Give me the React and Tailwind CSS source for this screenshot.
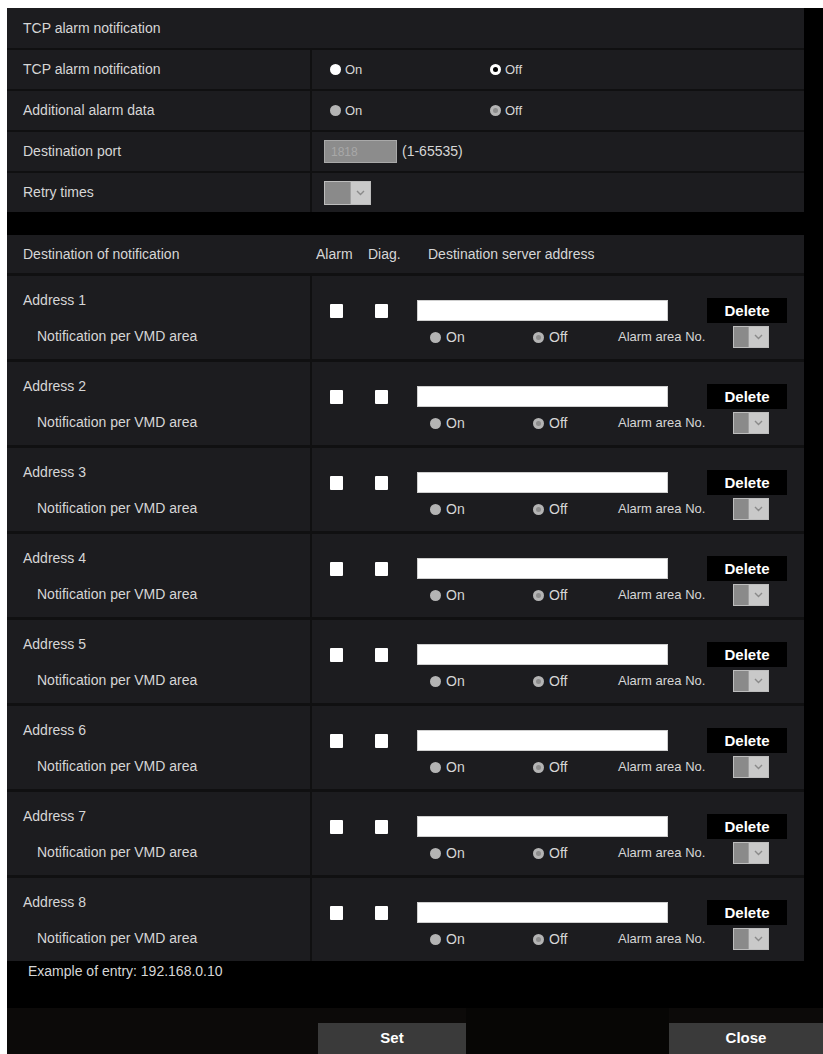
import React from 'react';

const rowBg = 'bg-[#1c1c1f]';

const Radio = ({ kind }) => {
  if (kind === 'on') return <span className="inline-block w-[11px] h-[11px] rounded-full bg-white" />;
  if (kind === 'off')
    return (
      <span className="inline-flex w-[11px] h-[11px] rounded-full bg-white items-center justify-center">
        <span className="w-[5px] h-[5px] rounded-full bg-black" />
      </span>
    );
  if (kind === 'dimOff')
    return (
      <span className="inline-flex w-[11px] h-[11px] rounded-full bg-[#b4b4b4] items-center justify-center">
        <span className="w-[5px] h-[5px] rounded-full bg-[#8c8c8c]" />
      </span>
    );
  return <span className="inline-block w-[11px] h-[11px] rounded-full bg-[#b4b4b4]" />;
};

const Select = ({ w }) => (
  <div className={`flex ${w} h-full border border-[#bdbdbd] bg-[#8a8a8a]`}>
    <div className="flex-1" />
    <div className="w-[20px] h-full bg-[#c9c9c9] border-l border-[#a0a0a0] flex items-center justify-center">
      <svg width="9" height="6" viewBox="0 0 9 6">
        <path d="M1 1 L4.5 4.5 L8 1" fill="none" stroke="#8a8a8a" strokeWidth="1.4" />
      </svg>
    </div>
  </div>
);

const TopRow = ({ label, children }) => (
  <div className="flex h-[39px] gap-[2px]">
    <div className={`w-[303px] ${rowBg} pl-[16px] flex items-center`}>{label}</div>
    <div className={`flex-1 ${rowBg} flex items-center`}>{children}</div>
  </div>
);

const AddressRow = ({ n }) => (
  <div className="flex h-[83px] gap-[2px]">
    <div className={`w-[303px] ${rowBg} pl-[16px] pt-[16px] leading-[16px]`}>
      <div>Address {n}</div>
      <div className="pl-[14px] mt-[20px]">Notification per VMD area</div>
    </div>
    <div className={`flex-1 ${rowBg} pl-[18px] pt-[22px]`}>
      <div className="flex items-center h-[25px]">
        <span className="w-[13px] h-[14px] bg-white rounded-[1px]" />
        <span className="w-[13px] h-[14px] bg-white rounded-[1px] ml-[32px]" />
        <div className="ml-[29px] w-[251px] h-[21px] bg-white border border-[#cfcfcf]" />
        <button className="ml-[39px] w-[80px] h-[25px] bg-black text-white font-bold text-[15px] leading-none">
          Delete
        </button>
      </div>
      <div className="flex items-center h-[22px] mt-[3px] text-[14px]">
        <div className="ml-[100px] w-[103px] flex items-center gap-[5px]">
          <Radio kind="dim" />
          <span>On</span>
        </div>
        <div className="w-[85px] flex items-center gap-[5px]">
          <Radio kind="dimOff" />
          <span>Off</span>
        </div>
        <div className="w-[115px] text-[13px]">Alarm area No.</div>
        <div className="h-[22px]">
          <Select w="w-[36px]" />
        </div>
      </div>
    </div>
  </div>
);

export default function App() {
  return (
    <div className="w-[823px] h-[1054px] bg-white pt-[8px] pl-[7px] overflow-hidden font-['Liberation_Sans',Arial,sans-serif] text-[14px] text-[#d6d6d6]">
      <div className="bg-black h-full flex flex-col">
        <div className="w-[797px] flex flex-col gap-[2px] bg-[#101011]">
          <div className={`h-[40px] ${rowBg} pl-[16px] flex items-center`}>TCP alarm notification</div>
          <TopRow label="TCP alarm notification">
            <div className="pl-[18px] w-[178px] flex items-center gap-[4px]">
              <Radio kind="on" />
              <span className="text-[13px]">On</span>
            </div>
            <div className="flex items-center gap-[4px]">
              <Radio kind="off" />
              <span className="text-[13px]">Off</span>
            </div>
          </TopRow>
          <TopRow label="Additional alarm data">
            <div className="pl-[18px] w-[178px] flex items-center gap-[4px]">
              <Radio kind="dim" />
              <span className="text-[13px]">On</span>
            </div>
            <div className="flex items-center gap-[4px]">
              <Radio kind="dimOff" />
              <span className="text-[13px]">Off</span>
            </div>
          </TopRow>
          <TopRow label="Destination port">
            <div className="ml-[12px] w-[73px] h-[23px] bg-[#8c8c8c] border border-[#a9a9a9] pl-[6px] flex items-center text-[12px] text-[#a8a8a8]">
              1818
            </div>
            <span className="ml-[5px]">(1-65535)</span>
          </TopRow>
          <TopRow label="Retry times">
            <div className="ml-[12px] h-[24px]">
              <Select w="w-[47px]" />
            </div>
          </TopRow>
        </div>

        <div className="w-[797px] mt-[23px] flex flex-col gap-[3px] bg-[#101011]">
          <div className={`h-[38px] ${rowBg} pl-[16px] flex items-center`}>
            <span className="w-[293px]">Destination of notification</span>
            <span className="w-[52px]">Alarm</span>
            <span className="w-[60px]">Diag.</span>
            <span>Destination server address</span>
          </div>
          {[1, 2, 3, 4, 5, 6, 7, 8].map((n) => (
            <AddressRow key={n} n={n} />
          ))}
        </div>

        <div className="pl-[21px] pt-[2px] leading-[16px]">Example of entry: 192.168.0.10</div>

        <div className="mt-auto h-[46px] bg-[#0c0a09] flex items-end">
          <button className="ml-[311px] w-[148px] h-[31px] bg-[#3a3a3a] text-white font-bold text-[15px]">Set</button>
          <div className="flex-1 h-full bg-[#070605]" />
          <button className="w-[154px] h-[31px] bg-[#3a3a3a] text-white font-bold text-[15px]">Close</button>
        </div>
      </div>
    </div>
  );
}
